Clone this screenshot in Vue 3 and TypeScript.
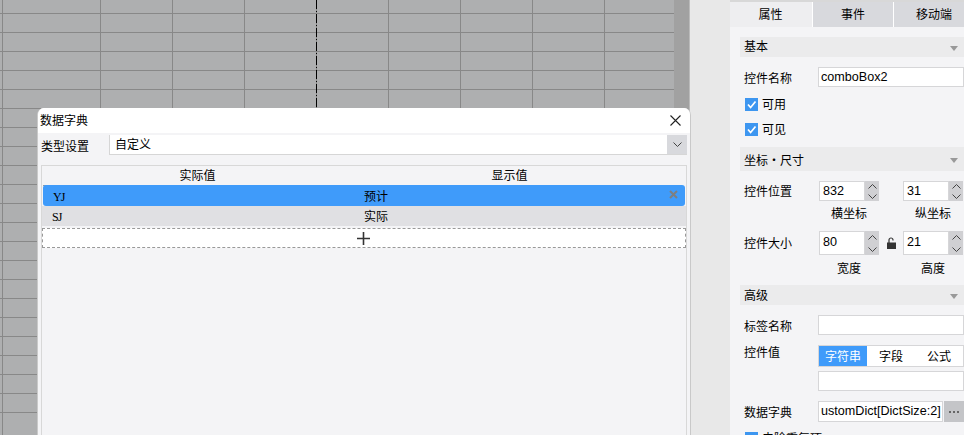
<script setup lang="ts">
const tabs = ['属性', '事件', '移动端']
const rows = [
  { value: 'YJ', label: '预计', active: true },
  { value: 'SJ', label: '实际', active: false },
]
const modes = ['字符串', '字段', '公式']
const posRows = [
  { title: '控件位置', a: '832', b: '31', aName: '横坐标', bName: '纵坐标', tall: false },
  { title: '控件大小', a: '80', b: '21', aName: '宽度', bName: '高度', tall: true },
]
</script>

<template>
  <div class="app">
    <div class="canvas">
      <div class="sheet"></div>
      <div class="scroll"></div>

      <div class="dialog">
        <div class="dialog-title">
          <span>数据字典</span>
          <svg class="close" width="11" height="11" viewBox="0 0 11 11">
            <path d="M.5.5l10 10M10.5.5l-10 10" stroke="#222" stroke-width="1.1" fill="none" />
          </svg>
        </div>
        <div class="type-row">
          <span class="type-label">类型设置</span>
          <div class="combo">
            <span class="combo-text">自定义</span>
            <span class="combo-arrow">
              <svg width="9" height="5" viewBox="0 0 9 5">
                <path d="M.5.5l4 4 4-4" stroke="#444" fill="none" />
              </svg>
            </span>
          </div>
        </div>
        <div class="table">
          <div class="thead">
            <span>实际值</span>
            <span>显示值</span>
          </div>
          <div class="thead-line"></div>
          <div v-for="row in rows" :key="row.value" class="row" :class="{ active: row.active }">
            <span class="cell-code">{{ row.value }}</span>
            <span class="cell-label">{{ row.label }}</span>
            <svg v-if="row.active" class="row-del" width="9" height="9" viewBox="0 0 9 9">
              <path d="M1 1l7 7M8 1l-7 7" stroke="#7f7f7f" stroke-width="2" fill="none" />
            </svg>
          </div>
          <div class="add-row">
            <svg width="13" height="13" viewBox="0 0 13 13">
              <path d="M0 6.5h13M6.5 0v13" stroke="#333" stroke-width="1.6" fill="none" />
            </svg>
          </div>
        </div>
      </div>
    </div>

    <div class="gutter"></div>

    <div class="panel">
      <div class="tabs">
        <div v-for="(tab, i) in tabs" :key="tab" class="tab" :class="{ current: i === 0 }">{{ tab }}</div>
      </div>

      <div class="panel-body">
        <div class="section">
          <span>基本</span><i class="caret"></i>
        </div>
        <div class="field first">
          <label>控件名称</label>
          <div class="input">comboBox2</div>
        </div>
        <div class="check first-check">
          <svg width="13" height="13" viewBox="0 0 13 13">
            <rect width="13" height="13" fill="#3d96f0" />
            <path d="M3 6.5l2.6 3L10.5 3.5" stroke="#fff" stroke-width="1.7" fill="none" />
          </svg>
          <span>可用</span>
        </div>
        <div class="check">
          <svg width="13" height="13" viewBox="0 0 13 13">
            <rect width="13" height="13" fill="#3d96f0" />
            <path d="M3 6.5l2.6 3L10.5 3.5" stroke="#fff" stroke-width="1.7" fill="none" />
          </svg>
          <span>可见</span>
        </div>

        <div class="section tall">
          <span>坐标・尺寸</span><i class="caret"></i>
        </div>
        <div v-for="(pos, i) in posRows" :key="pos.title" class="pos" :class="{ second: i === 1 }">
          <div class="pos-main">
            <label>{{ pos.title }}</label>
            <div class="spin">
              <div class="spin-input">{{ pos.a }}</div>
              <div class="spin-btns">
                <svg width="9" height="5" viewBox="0 0 9 5"><path d="M.5 4.5l4-4 4 4" stroke="#444" fill="none" /></svg>
                <svg width="9" height="5" viewBox="0 0 9 5"><path d="M.5.5l4 4 4-4" stroke="#444" fill="none" /></svg>
              </div>
            </div>
            <div class="lock-slot">
              <svg v-if="pos.tall" width="9" height="12" viewBox="0 0 9 12">
                <path d="M2 6V3a2 2 0 0 1 4 0v.5" stroke="#333" stroke-width="1.2" fill="none" />
                <rect y="5.5" width="9" height="6.5" fill="#333" />
              </svg>
            </div>
            <div class="spin">
              <div class="spin-input">{{ pos.b }}</div>
              <div class="spin-btns">
                <svg width="9" height="5" viewBox="0 0 9 5"><path d="M.5 4.5l4-4 4 4" stroke="#444" fill="none" /></svg>
                <svg width="9" height="5" viewBox="0 0 9 5"><path d="M.5.5l4 4 4-4" stroke="#444" fill="none" /></svg>
              </div>
            </div>
          </div>
          <div class="pos-names">
            <span>{{ pos.aName }}</span>
            <span>{{ pos.bName }}</span>
          </div>
        </div>

        <div class="section adv">
          <span>高级</span><i class="caret"></i>
        </div>
        <div class="field first">
          <label>标签名称</label>
          <div class="input"></div>
        </div>
        <div class="field value-field">
          <label>控件值</label>
          <div class="value-col">
            <div class="segment">
              <span v-for="(mode, i) in modes" :key="mode" :class="{ on: i === 0 }">{{ mode }}</span>
            </div>
            <div class="input"></div>
          </div>
        </div>
        <div class="field dict-field">
          <label>数据字典</label>
          <div class="input dict"><span>ustomDict[DictSize:2]</span></div>
          <div class="more">
            <i></i><i></i><i></i>
          </div>
        </div>
        <div class="check last-check">
          <svg width="13" height="13" viewBox="0 0 13 13">
            <rect width="13" height="13" fill="#3d96f0" />
            <path d="M3 6.5l2.6 3L10.5 3.5" stroke="#fff" stroke-width="1.7" fill="none" />
          </svg>
          <span>去除重复项</span>
        </div>
      </div>
    </div>
  </div>
</template>

<style>
html,
body {
  margin: 0;
  overflow: hidden;
}
</style>

<style scoped>
.app {
  display: flex;
  width: 964px;
  height: 435px;
  overflow: hidden;
  background: #e8e8e8;
  color: #000;
  font: 12px/14px "Liberation Sans", "Noto Sans CJK SC", sans-serif;
}

.canvas {
  position: relative;
  display: flex;
  flex: none;
  width: 690px;
  height: 435px;
}

.sheet {
  flex: 1;
  background-color: #aeafb0;
  background-image:
    repeating-linear-gradient(to bottom, #000 0 9px, transparent 9px 11px, #000 11px 12px, transparent 12px 14px),
    repeating-linear-gradient(to right, transparent 0 71px, #888 71px 72px),
    repeating-linear-gradient(to bottom, transparent 0 18px, #888 18px 19px);
  background-size: 1px 100%, 100% 100%, 100% 100%;
  background-position: 316px 0, 29px 0, 0 -5px;
  background-repeat: no-repeat, repeat, repeat;
}

.scroll {
  flex: none;
  width: 15px;
  background: #a1a1a1;
  border-right: 1px solid #bbb;
}

.dialog {
  position: absolute;
  left: 37px;
  top: 108px;
  box-sizing: border-box;
  width: 654px;
  height: 340px;
  background: #f4f4f6;
  border-right: 1px solid #c9c9c9;
  border-left: 1px solid #c9c9c9;
  border-radius: 7px 7px 0 0;
  overflow: hidden;
}

.dialog-title {
  display: flex;
  align-items: center;
  justify-content: space-between;
  height: 25px;
  padding: 0 9px 0 2px;
  background: #fff;
}

.type-row {
  display: flex;
  align-items: center;
  height: 20px;
  margin-top: 2px;
  padding-left: 3px;
}

.type-label {
  width: 68px;
  padding-top: 3px;
}

.combo {
  display: flex;
  box-sizing: border-box;
  width: 578px;
  height: 20px;
  background: #fff;
  border-bottom: 1px solid #d6d6d6;
  border-left: 1px solid #d6d6d6;
}

.combo-text {
  flex: 1;
  padding-left: 5px;
  line-height: 21px;
}

.combo-arrow {
  display: flex;
  align-items: center;
  justify-content: center;
  width: 20px;
  background: #d8d9dd;
}

.table {
  box-sizing: border-box;
  width: 646px;
  height: 300px;
  margin: 10px 0 0 3px;
  border: 1px solid #d8d8d8;
}

.thead {
  display: flex;
  height: 19px;
  line-height: 21px;
}

.thead span {
  box-sizing: border-box;
  width: 310px;
  padding-left: 1px;
  text-align: center;
}

.thead span + span {
  width: 314px;
}

.thead-line {
  height: 1px;
  margin: 0 22px 0 1px;
  background: #999;
}

.row {
  position: relative;
  display: flex;
  align-items: center;
  height: 20px;
  box-sizing: border-box;
  padding-top: 2px;
  background: #e0e0e3;
}

.row.active {
  margin: -1px 1px 0;
  height: 21px;
  background: #3f9bfa;
  border-radius: 3px;
}

.cell-code {
  width: 321px;
  padding-left: 10px;
  box-sizing: border-box;
  font-family: "Liberation Serif", serif;
  font-size: 12px;
  letter-spacing: -1px;
}

.row:not(.active) .cell-code {
  width: 322px;
}

.cell-label {
  flex: 1;
}

.row-del {
  position: absolute;
  top: 5px;
  right: 7px;
}

.add-row {
  display: flex;
  align-items: center;
  justify-content: center;
  box-sizing: border-box;
  height: 20px;
  margin: 2px 0 0;
  padding-right: 2px;
  background: #fff;
  border: 1px dashed #999;
}

.gutter {
  flex: none;
  width: 40px;
}

.panel {
  flex: none;
  width: 244px;
  height: 435px;
  box-sizing: border-box;
  border-top: 2px solid #d8d8d8;
  background: #f4f4f6;
}

.tabs {
  display: flex;
  gap: 1px;
  height: 25px;
  background: #fff;
}

.tab {
  flex: none;
  width: 80px;
  background: #d8d9dd;
  line-height: 27px;
  text-align: center;
  font-size: 12px;
}

.tab.current {
  width: 82px;
  margin-right: -1px;
  padding-right: 1px;
  box-sizing: border-box;
  background: #eeeef0;
}

.tab.current + .tab {
  margin-left: 1px;
}

.panel-body {
  padding: 10px 0 0 10px;
}

.section {
  display: flex;
  align-items: center;
  justify-content: space-between;
  height: 20px;
  padding: 0 16px 0 4px;
  background: #ebebec;
  width: 234px;
  box-sizing: border-box;
}

.section.tall {
  height: 24px;
  margin-top: 11px;
  padding-top: 3px;
}

.section.adv {
  margin-top: 9px;
  padding-top: 2px;
}

.caret {
  width: 0;
  height: 0;
  border: 4px solid transparent;
  border-top: 5px solid #999;
  border-bottom: 0;
  margin-top: 2px;
}

.tall .caret {
  margin-top: -1px;
}

.adv .caret {
  margin-top: 0;
}

.field {
  display: flex;
  align-items: center;
  width: 220px;
  margin-left: 4px;
}

.field.first {
  margin-top: 10px;
}

.field label {
  flex: none;
  width: 74px;
  padding-top: 3px;
}

.input {
  box-sizing: border-box;
  flex: 1;
  height: 20px;
  padding-left: 2px;
  background: #fff;
  border: 1px solid #d6d6d8;
  font-size: 12.6px;
  line-height: 18px;
  white-space: nowrap;
  overflow: hidden;
}

.check {
  display: flex;
  align-items: center;
  gap: 4px;
  height: 13px;
  margin: 12px 0 0 5px;
}

.first-check {
  margin-top: 11px;
}

.last-check {
  margin-top: 10px;
}

.pos {
  margin: 10px 0 0 4px;
}

.pos-main {
  display: flex;
  align-items: stretch;
  height: 20px;
}

.second .pos-main {
  height: 24px;
}

.pos-main label {
  flex: none;
  width: 75px;
  line-height: 22px;
}

.second .pos-main label {
  line-height: 26px;
}

.spin {
  display: flex;
  flex: none;
  width: 60px;
}

.spin-input {
  box-sizing: border-box;
  flex: 1;
  padding-left: 3px;
  background: #fff;
  border: 1px solid #d6d6d8;
  font-size: 12.6px;
  line-height: 18px;
}

.second .spin-input {
  line-height: 20px;
}

.spin-btns {
  display: flex;
  flex: none;
  flex-direction: column;
  align-items: center;
  justify-content: space-around;
  width: 14px;
  background: #d0d0d3;
}

.lock-slot {
  display: flex;
  flex: none;
  justify-content: center;
  width: 24px;
  padding-top: 6px;
  box-sizing: border-box;
}

.pos-names {
  display: flex;
  margin: 6px 0 0 75px;
}

.second .pos-names {
  margin-top: 7px;
}

.pos-names span {
  flex: none;
  width: 60px;
  text-align: center;
}

.pos-names span + span {
  margin-left: 24px;
}

.value-field {
  align-items: flex-start;
  margin-top: 10px;
}

.value-field label {
  padding-top: 1px;
}

.value-col {
  display: flex;
  flex: 1;
  flex-direction: column;
  gap: 4px;
}

.value-col .input {
  flex: none;
}

.segment {
  display: flex;
  box-sizing: border-box;
  height: 22px;
  background: #fff;
  border: 1px solid #d6d6d8;
  line-height: 23px;
}

.segment span {
  flex: none;
  width: 48px;
  text-align: center;
}

.segment .on {
  background: #3f9bfa;
  color: #fff;
}

.dict-field {
  height: 21px;
  margin-top: 10px;
}

.input.dict {
  height: 21px;
  line-height: 19px;
}

.more {
  display: flex;
  align-items: center;
  justify-content: center;
  gap: 2px;
  flex: none;
  width: 20px;
  height: 21px;
  margin-left: 1px;
  background: #c4c5c8;
}

.more i {
  width: 2px;
  height: 2px;
  background: #666;
}
</style>
